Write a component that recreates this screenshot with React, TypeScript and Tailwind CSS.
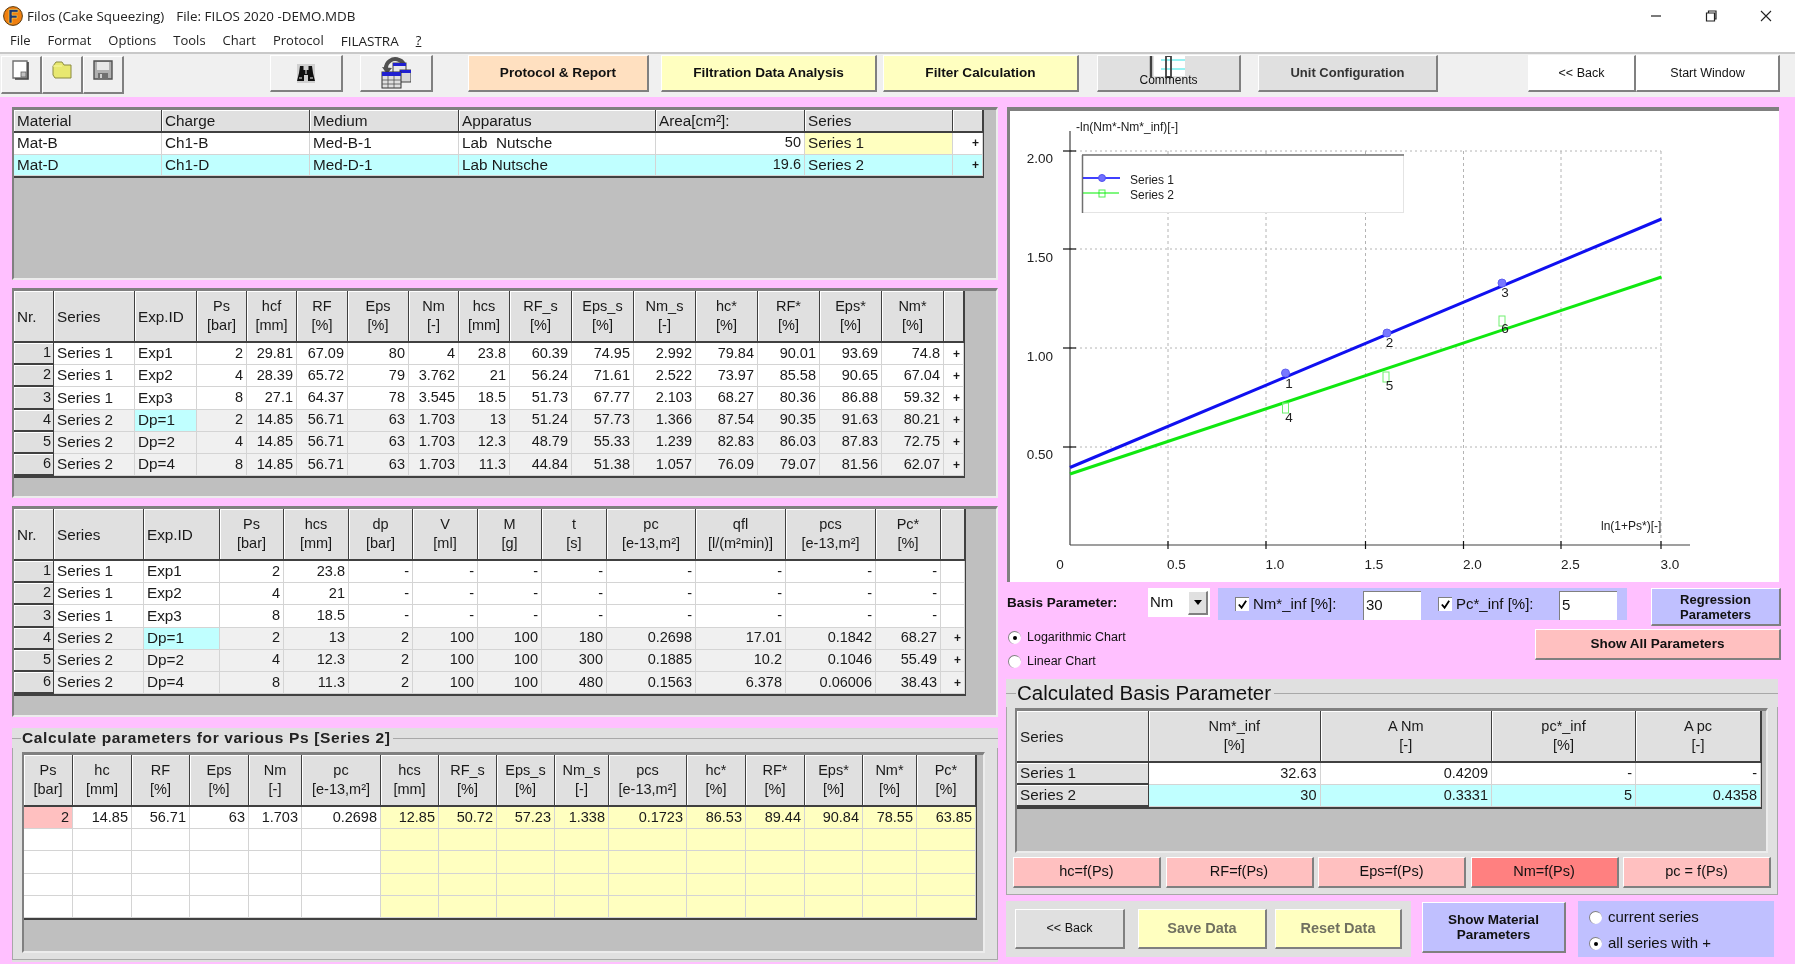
const raised = 'border-t border-l border-t-white border-l-white border-r-2 border-b-2 border-r-[#808080] border-b-[#808080]';
const well = 'bg-[#bfbfbf] border-t-[3px] border-l-2 border-t-[#808080] border-l-[#808080] border-r-2 border-b-2 border-r-[#ececec] border-b-[#ececec]';

interface GridProps {
  cols: string;
  headers: string[];
  headerHeight: string;
  rowHeight: string;
  rows: string[][];
  left: number[];
  rightCells?: number[];
  rowHead?: boolean;
  rowHeadLeft?: boolean;
  bg?: (row: number, col: number) => string;
}

function DataGrid({ cols, headers, headerHeight, rowHeight, rows, left, rightCells = [], rowHead = false, rowHeadLeft = false, bg }: GridProps) {
  return (
    <div className={`grid w-fit border-r border-b-2 border-r-[#404040] border-b-[#404040] text-[14.5px] text-[#1a1a1a] ${cols}`}>
      {headers.map((h, i) => (
        <div
          key={i}
          className={`flex flex-col justify-center border-r border-b-2 border-r-[#404040] border-b-[#404040] bg-[#e0e0e0] leading-[19px] shadow-[inset_1px_1px_0_#fff] ${headerHeight} ${left.includes(i) ? 'items-start pl-[3px] text-[15.3px]' : 'items-center'}`}
        >
          {h.split('\n').map((line) => (
            <span key={line} className="whitespace-nowrap">{line}</span>
          ))}
        </div>
      ))}
      {rows.map((row, r) =>
        row.map((cell, c) => {
          if (rowHead && c === 0) {
            return (
              <div key={c} className={`flex items-center border-r border-b-2 border-r-[#404040] border-b-[#404040] bg-[#e0e0e0] shadow-[inset_1px_1px_0_#fff] ${rowHeight} ${rowHeadLeft ? 'justify-start pl-[3px] text-[15.3px]' : 'justify-end pr-[2px]'}`}>
                {cell}
              </div>
            );
          }
          const plus = cell === '+';
          const isLeft = left.includes(c) && !rightCells.includes(c);
          return (
            <div
              key={c}
              className={`flex items-center overflow-hidden whitespace-pre border-r border-b border-r-[#d4d4d4] border-b-[#d4d4d4] ${rowHeight} ${isLeft ? 'justify-start pl-[3px] text-[15.3px]' : 'justify-end pr-[3px]'} ${plus ? 'text-[12px] font-bold' : ''} ${bg ? bg(r, c) : 'bg-white'}`}
            >
              {cell}
            </div>
          );
        }),
      )}
    </div>
  );
}

function Check() {
  return (
    <span className="flex h-[14px] w-[14px] items-center justify-center border-t border-l border-t-[#808080] border-l-[#808080] bg-white">
      <svg viewBox="0 0 12 12" className="h-[11px] w-[11px]">
        <path d="M2 6l3 3.5L10 2" fill="none" stroke="#000" strokeWidth="2" />
      </svg>
    </span>
  );
}

function Radio({ on, label }: { on: boolean; label: string }) {
  return (
    <div className="flex h-[16px] items-center gap-[6px]">
      <span className="flex h-[13px] w-[13px] items-center justify-center rounded-full border-t border-l border-t-[#808080] border-l-[#808080] bg-white">
        {on && <span className="h-[4px] w-[4px] rounded-full bg-black" />}
      </span>
      <span className="whitespace-nowrap">{label}</span>
    </div>
  );
}

function Logo() {
  return (
    <svg viewBox="0 0 20 20" className="h-[20px] w-[20px]">
      <circle cx="10" cy="10" r="9.4" fill="#f08010" stroke="#5a3a10" strokeWidth="1" />
      <path d="M6 3.5h9v2.8H9v3h5v2.8H9v5H6z" fill="#20386e" stroke="#f8d860" strokeWidth="0.6" />
    </svg>
  );
}

function NewIcon() {
  return (
    <svg viewBox="0 0 18 20" className="h-[20px] w-[18px]">
      <path d="M1 1h14v17H1z" fill="#fff" stroke="#707070" strokeWidth="1.4" />
      <path d="M16 2v17H3" fill="none" stroke="#404040" strokeWidth="1.6" />
      <rect x="9" y="12" width="5" height="5" fill="#c0c0c0" stroke="#606060" strokeWidth="0.8" />
    </svg>
  );
}

function FolderIcon() {
  return (
    <svg viewBox="0 0 20 18" className="h-[18px] w-[20px]">
      <path d="M1 5l3-4h6l2 3h7v13H3L1 14z" fill="#e8e870" stroke="#8a8a40" strokeWidth="1" />
      <path d="M1 5h9" fill="none" stroke="#f8f8a0" strokeWidth="1" />
    </svg>
  );
}

function SaveIcon() {
  return (
    <svg viewBox="0 0 20 20" className="h-[20px] w-[20px]">
      <path d="M1 1h18v18H1z" fill="#b0b0b0" stroke="#505050" strokeWidth="1.4" />
      <rect x="4" y="2" width="12" height="8" fill="#e8e8e8" />
      <rect x="5" y="13" width="10" height="6" fill="#707070" />
      <rect x="7" y="14" width="2" height="4" fill="#d0d0d0" />
    </svg>
  );
}

function BinocularsIcon() {
  return (
    <svg viewBox="0 0 18 19" className="h-[19px] w-[18px]">
      <rect width="18" height="19" fill="#d0d0d0" />
      <path d="M3 2h3.5v4h5V2H15l1 7 2 8h-7v-6H7v6H0l2-8z" fill="#101010" />
      <path d="M8 6h2v4H8zM2 13h3v2H2zM13 13h3v2h-3z" fill="#808080" />
    </svg>
  );
}

function CalendarIcon() {
  return (
    <svg viewBox="0 0 30 32" className="h-[32px] w-[30px]">
      <path d="M5 13C4 5 12 0 18 3c3 1 5 4 5 7" fill="none" stroke="#505050" strokeWidth="4" />
      <path d="M1 10l5 7 5-6z" fill="#505050" />
      <rect x="12" y="6" width="13" height="10" fill="#e8e8e8" stroke="#404040" />
      <rect x="12" y="6" width="13" height="3" fill="#2020d0" />
      <rect x="19" y="13" width="11" height="12" fill="#d8d8d8" stroke="#404040" />
      <rect x="19" y="13" width="11" height="3" fill="#2020d0" />
      <rect x="1" y="15" width="19" height="16" fill="#e0e0e0" stroke="#303030" />
      <rect x="1" y="15" width="19" height="4" fill="#2020d0" />
      <path d="M1 23h19M1 27h19M7 19v12M13 19v12" stroke="#505050" strokeWidth="0.8" />
    </svg>
  );
}

function CommentsIcon() {
  return (
    <svg viewBox="0 0 40 22" className="h-[22px] w-[40px]">
      <rect x="5" y="0" width="31" height="20" fill="#fff" />
      <path d="M12 4h24M12 13h24" stroke="#30e8e8" strokeWidth="1.2" />
      <path d="M2 0v21" stroke="#404040" strokeWidth="2.4" />
      <path d="M17 0h5v21h-5z" fill="none" stroke="#404040" strokeWidth="1.8" />
    </svg>
  );
}

function Chart() {
  const xs = [1169, 1267, 1366.5, 1464.5, 1562, 1662];
  const ys = [151, 249, 348, 447];
  const xLabels: [number, string][] = [[1061, '0'], [1177.5, '0.5'], [1276, '1.0'], [1375, '1.5'], [1473.5, '2.0'], [1571.5, '2.5'], [1671, '3.0']];
  const yLabels: [number, string][] = [[163, '2.00'], [262, '1.50'], [361, '1.00'], [459, '0.50']];
  const blue: [number, number][] = [[1286.5, 373], [1388, 333], [1503, 283]];
  const green: [number, number][] = [[1286.5, 408], [1387, 377], [1503, 321]];
  const nums: [number, number, string][] = [[1290, 388, '1'], [1390.5, 347, '2'], [1506, 297, '3'], [1290, 422, '4'], [1390.5, 390, '5'], [1506, 333, '6']];
  return (
    <svg viewBox="1011 111 770 470" className="h-[470px] w-[770px] text-[13.5px]">
      {xs.map((x) => (
        <line key={x} x1={x} y1={151} x2={x} y2={545} stroke="#b4b4b4" strokeDasharray="3 3" />
      ))}
      {ys.map((y) => (
        <line key={y} x1={1071} y1={y} x2={1662} y2={y} stroke="#b4b4b4" strokeDasharray="2 3" />
      ))}
      <line x1={1071} y1={131} x2={1071} y2={545} stroke="#404040" strokeWidth="1.2" />
      <line x1={1071} y1={545} x2={1691} y2={545} stroke="#404040" strokeWidth="1.2" />
      {ys.map((y) => (
        <line key={y} x1={1064} y1={y} x2={1077} y2={y} stroke="#101010" strokeWidth="1.2" />
      ))}
      {xs.map((x) => (
        <line key={x} x1={x} y1={541} x2={x} y2={549} stroke="#101010" strokeWidth="1.2" />
      ))}
      {yLabels.map(([y, t]) => (
        <text key={t} x={1054} y={y} textAnchor="end" fill="#202020">{t}</text>
      ))}
      {xLabels.map(([x, t]) => (
        <text key={t} x={x} y={569} textAnchor="middle" fill="#202020">{t}</text>
      ))}
      <text x={1077} y={131} fill="#202020" className="text-[12px]">-ln(Nm*-Nm*_inf)[-]</text>
      <text x={1602} y={530} fill="#202020" className="text-[12px]">ln(1+Ps*)[-]</text>
      <rect x={1083.5} y={154.5} width={321} height={58} fill="#fff" stroke="#e4e4e4" />
      <path d="M1083 155h322M1083.5 155v58" fill="none" stroke="#707070" strokeWidth="1.5" />
      <line x1={1084} y1={178} x2={1121} y2={178} stroke="#0000ff" strokeWidth="1.5" />
      <circle cx={1103} cy={178} r={3.5} fill="#7070ff" stroke="#5050f0" />
      <rect x={1100} y={190} width={6} height={7} fill="#fff" stroke="#50f050" />
      <line x1={1084} y1={193} x2={1120} y2={193} stroke="#00f000" strokeWidth="1.2" />
      <text x={1131} y={184} fill="#202020" className="text-[12px]">Series 1</text>
      <text x={1131} y={199} fill="#202020" className="text-[12px]">Series 2</text>
      <line x1={1071} y1={467.5} x2={1662.5} y2={219} stroke="#1010f0" strokeWidth="3" />
      <line x1={1071} y1={474} x2={1662.5} y2={277} stroke="#10e810" strokeWidth="3" />
      {blue.map(([x, y]) => (
        <circle key={x} cx={x} cy={y} r={4} fill="#7878ff" stroke="#6060f0" />
      ))}
      {green.map(([x, y]) => (
        <rect key={x} x={x - 3} y={y - 5} width={6} height={10} fill="#fff" fillOpacity="0.4" stroke="#70f070" />
      ))}
      {nums.map(([x, y, t]) => (
        <text key={t} x={x} y={y} textAnchor="middle" fill="#202020">{t}</text>
      ))}
    </svg>
  );
}

const experimentRows = [
  ['1', 'Series 1', 'Exp1', '2', '29.81', '67.09', '80', '4', '23.8', '60.39', '74.95', '2.992', '79.84', '90.01', '93.69', '74.8', '+'],
  ['2', 'Series 1', 'Exp2', '4', '28.39', '65.72', '79', '3.762', '21', '56.24', '71.61', '2.522', '73.97', '85.58', '90.65', '67.04', '+'],
  ['3', 'Series 1', 'Exp3', '8', '27.1', '64.37', '78', '3.545', '18.5', '51.73', '67.77', '2.103', '68.27', '80.36', '86.88', '59.32', '+'],
  ['4', 'Series 2', 'Dp=1', '2', '14.85', '56.71', '63', '1.703', '13', '51.24', '57.73', '1.366', '87.54', '90.35', '91.63', '80.21', '+'],
  ['5', 'Series 2', 'Dp=2', '4', '14.85', '56.71', '63', '1.703', '12.3', '48.79', '55.33', '1.239', '82.83', '86.03', '87.83', '72.75', '+'],
  ['6', 'Series 2', 'Dp=4', '8', '14.85', '56.71', '63', '1.703', '11.3', '44.84', '51.38', '1.057', '76.09', '79.07', '81.56', '62.07', '+'],
];

const permeabilityRows = [
  ['1', 'Series 1', 'Exp1', '2', '23.8', '-', '-', '-', '-', '-', '-', '-', '-', ''],
  ['2', 'Series 1', 'Exp2', '4', '21', '-', '-', '-', '-', '-', '-', '-', '-', ''],
  ['3', 'Series 1', 'Exp3', '8', '18.5', '-', '-', '-', '-', '-', '-', '-', '-', ''],
  ['4', 'Series 2', 'Dp=1', '2', '13', '2', '100', '100', '180', '0.2698', '17.01', '0.1842', '68.27', '+'],
  ['5', 'Series 2', 'Dp=2', '4', '12.3', '2', '100', '100', '300', '0.1885', '10.2', '0.1046', '55.49', '+'],
  ['6', 'Series 2', 'Dp=4', '8', '11.3', '2', '100', '100', '480', '0.1563', '6.378', '0.06006', '38.43', '+'],
];

const empty = Array.from({ length: 16 }, () => '');
const calcRows = [
  ['2', '14.85', '56.71', '63', '1.703', '0.2698', '12.85', '50.72', '57.23', '1.338', '0.1723', '86.53', '89.44', '90.84', '78.55', '63.85'],
  empty, empty, empty, empty,
];

const seriesBg = (r: number, c: number) => {
  if (r < 3) return 'bg-white';
  if (r === 3 && c === 2) return 'bg-[#c0ffff]';
  return 'bg-[#f0f0f0]';
};

function App() {
  return (
    <div className="flex h-[964px] w-[1795px] flex-col overflow-hidden bg-white [font-family:'Liberation_Sans',Arial,sans-serif] text-[#111] blur-[0.35px]">
      {/* title + menu */}
      <div className="flex h-[30px] items-center pl-[3px] pt-[2px] [font-family:'Open_Sans',sans-serif] text-[13.4px] text-[#222]">
        <Logo />
        <span className="ml-[4px]">Filos (Cake Squeezing)</span>
        <span className="ml-[12px]">File: FILOS 2020 -DEMO.MDB</span>
        <span className="ml-auto mr-[23px] flex items-center gap-[43px]">
          <svg viewBox="0 0 12 12" className="h-[12px] w-[12px]"><path d="M1 6h10" stroke="#222" strokeWidth="1.2" /></svg>
          <svg viewBox="0 0 12 12" className="h-[12px] w-[12px]"><path d="M1.5 3h8v8h-8zM3.5 3V1h7.5v8H9.5" fill="none" stroke="#222" strokeWidth="1.2" /></svg>
          <svg viewBox="0 0 12 12" className="h-[12px] w-[12px]"><path d="M1 1l10 10M11 1L1 11" stroke="#222" strokeWidth="1.1" /></svg>
        </span>
      </div>
      <div className="flex h-[22px] items-center gap-[17px] pl-[10px] [font-family:'Open_Sans',sans-serif] text-[13px] text-[#222]">
        <span>File</span>
        <span>Format</span>
        <span>Options</span>
        <span>Tools</span>
        <span>Chart</span>
        <span>Protocol</span>
        <span className="text-[13.5px]">FILASTRA</span>
        <span className="underline">?</span>
      </div>

      {/* toolbar */}
      <div className="flex h-[45px] items-start border-t-2 border-t-[#c8c8c8] bg-[#f0f0f0] pt-[1px] text-[13.6px]">
        <button className={`ml-[1px] mt-[1px] flex h-[38px] w-[41px] items-start justify-center pt-[3px] ${raised}`}><NewIcon /></button>
        <button className={`mt-[1px] flex h-[38px] w-[41px] items-start justify-center pt-[4px] ${raised}`}><FolderIcon /></button>
        <button className={`mt-[1px] flex h-[38px] w-[41px] items-start justify-center pt-[3px] ${raised}`}><SaveIcon /></button>
        <button className={`ml-[146px] flex h-[37px] w-[73px] items-center justify-center ${raised}`}><BinocularsIcon /></button>
        <button className={`ml-[17px] flex h-[37px] w-[73px] items-center justify-center ${raised}`}><CalendarIcon /></button>
        <button className={`ml-[35px] h-[37px] w-[181px] bg-[#ffe0c0] font-bold ${raised}`}>Protocol &amp; Report</button>
        <button className={`ml-[12px] h-[37px] w-[216px] bg-[#ffffc0] font-bold ${raised}`}>Filtration Data Analysis</button>
        <button className={`ml-[6px] h-[37px] w-[196px] bg-[#ffffc0] font-bold ${raised}`}>Filter Calculation</button>
        <button className={`ml-[18px] flex h-[37px] w-[144px] flex-col items-center bg-[#e0e0e0] text-[12px] ${raised}`}>
          <CommentsIcon />
          <span className="-mt-[5px] leading-[14px]">Comments</span>
        </button>
        <button className={`ml-[17px] h-[37px] w-[180px] bg-[#e0e0e0] text-[13px] font-bold text-[#333] ${raised}`}>Unit Configuration</button>
        <button className={`ml-[90px] h-[37px] w-[108px] bg-white text-[12.5px] ${raised}`}>&lt;&lt; Back</button>
        <button className={`h-[37px] w-[144px] bg-white text-[12.5px] ${raised}`}>Start Window</button>
      </div>

      {/* main */}
      <div className="flex flex-1 bg-[#ffc0ff] pl-[12px] pt-[10px]">
        {/* left column */}
        <div className="flex w-[986px] flex-col">
          <div className={`h-[173px] ${well}`}>
            <DataGrid
              cols="grid-cols-[148px_148px_149px_197px_149px_148px_30px]"
              headers={['Material', 'Charge', 'Medium', 'Apparatus', 'Area[cm²]:', 'Series', '']}
              headerHeight="h-[23px]"
              rowHeight="h-[21.7px]"
              left={[0, 1, 2, 3, 4, 5]}
              rightCells={[4]}
              rows={[
                ['Mat-B', 'Ch1-B', 'Med-B-1', 'Lab  Nutsche', '50', 'Series 1', '+'],
                ['Mat-D', 'Ch1-D', 'Med-D-1', 'Lab Nutsche', '19.6', 'Series 2', '+'],
              ]}
              bg={(r, c) => (r === 1 ? 'bg-[#c0ffff]' : c === 5 ? 'bg-[#ffffc0]' : 'bg-white')}
            />
          </div>
          <div className={`mt-[8px] h-[210px] ${well}`}>
            <DataGrid
              cols="grid-cols-[40px_81px_62px_50px_50px_51px_61px_50px_51px_62px_62px_62px_62px_62px_62px_62px_20px]"
              headers={['Nr.', 'Series', 'Exp.ID', 'Ps\n[bar]', 'hcf\n[mm]', 'RF\n[%]', 'Eps\n[%]', 'Nm\n[-]', 'hcs\n[mm]', 'RF_s\n[%]', 'Eps_s\n[%]', 'Nm_s\n[-]', 'hc*\n[%]', 'RF*\n[%]', 'Eps*\n[%]', 'Nm*\n[%]', '']}
              headerHeight="h-[52px]"
              rowHeight="h-[22.2px]"
              left={[0, 1, 2]}
              rowHead
              rows={experimentRows}
              bg={seriesBg}
            />
          </div>
          <div className={`mt-[8px] h-[211px] ${well}`}>
            <DataGrid
              cols="grid-cols-[40px_90px_76px_64px_65px_64px_65px_64px_65px_89px_90px_90px_65px_24px]"
              headers={['Nr.', 'Series', 'Exp.ID', 'Ps\n[bar]', 'hcs\n[mm]', 'dp\n[bar]', 'V\n[ml]', 'M\n[g]', 't\n[s]', 'pc\n[e-13,m²]', 'qfl\n[l/(m²min)]', 'pcs\n[e-13,m²]', 'Pc*\n[%]', '']}
              headerHeight="h-[52px]"
              rowHeight="h-[22.2px]"
              left={[0, 1, 2]}
              rowHead
              rows={permeabilityRows}
              bg={seriesBg}
            />
          </div>
          <div className="mt-[11px] h-[234px] bg-[#e0e0e0]">
            <div className="flex h-[20px] items-center">
              <div className="h-px w-[9px] bg-[#a8a8a8]" />
              <span className="whitespace-nowrap pl-px pr-[3px] text-[15.5px] font-bold tracking-[0.65px] text-[#222]">Calculate parameters for various Ps [Series 2]</span>
              <div className="h-px flex-1 bg-[#a8a8a8]" />
            </div>
            <div className="h-[212px] border-x border-b border-[#a8a8a8] pl-[9px] pt-[4px]">
              <div className={`h-[201px] w-[963px] ${well}`}>
                <DataGrid
                  cols="grid-cols-[49px_59px_58px_59px_53px_79px_58px_58px_58px_54px_78px_59px_59px_58px_54px_59px]"
                  headers={['Ps\n[bar]', 'hc\n[mm]', 'RF\n[%]', 'Eps\n[%]', 'Nm\n[-]', 'pc\n[e-13,m²]', 'hcs\n[mm]', 'RF_s\n[%]', 'Eps_s\n[%]', 'Nm_s\n[-]', 'pcs\n[e-13,m²]', 'hc*\n[%]', 'RF*\n[%]', 'Eps*\n[%]', 'Nm*\n[%]', 'Pc*\n[%]']}
                  headerHeight="h-[52px]"
                  rowHeight="h-[22.2px]"
                  left={[]}
                  rows={calcRows}
                  bg={(r, c) => (r === 0 && c === 0 ? 'bg-[#ffc0c0]' : c >= 6 ? 'bg-[#ffffc0]' : 'bg-white')}
                />
              </div>
            </div>
          </div>
        </div>

        {/* right column */}
        <div className="ml-[8px] flex w-[776px] flex-col">
          <div className="ml-px h-[475px] w-[772px] border-t-4 border-l-[3px] border-t-[#808080] border-l-[#808080] bg-white">
            <Chart />
          </div>

          <div className="mt-[6px] flex items-start text-[15px]">
            <span className="ml-px flex h-[30px] w-[141px] items-center text-[13.5px] font-bold">Basis Parameter:</span>
            <div className="flex h-[29px] w-[62px] items-center justify-between bg-white pl-[2px] pr-[2px]">
              <span>Nm</span>
              <span className={`flex h-[24px] w-[20px] items-center justify-center bg-[#e0e0e0] ${raised}`}>
                <svg viewBox="0 0 8 5" className="h-[5px] w-[8px]"><path d="M0 0h8L4 5z" fill="#000" /></svg>
              </span>
            </div>
            <div className="ml-[8px] flex h-[32px] w-[409px] items-center bg-[#c0c0ff]">
              <span className="ml-[17px]"><Check /></span>
              <span className="ml-[4px] w-[110px] whitespace-nowrap">Nm*_inf [%]:</span>
              <span className="flex h-[29px] w-[58px] items-center self-end border-t border-l border-t-[#808080] border-l-[#808080] bg-white pb-[2px] pl-[2px]">30</span>
              <span className="ml-[17px]"><Check /></span>
              <span className="ml-[4px] w-[103px] whitespace-nowrap">Pc*_inf [%]:</span>
              <span className="flex h-[29px] w-[58px] items-center self-end border-t border-l border-t-[#808080] border-l-[#808080] bg-white pb-[2px] pl-[2px]">5</span>
            </div>
            <button className={`ml-[24px] h-[38px] w-[130px] bg-[#c0c0ff] text-[13px] font-bold leading-[15px] ${raised}`}>
              Regression<br />Parameters
            </button>
          </div>

          <div className="mt-[3px] flex h-[47px] items-start justify-between text-[12.5px]">
            <div className="ml-[2px] flex flex-col gap-[8px]">
              <Radio on label="Logarithmic Chart" />
              <Radio on={false} label="Linear Chart" />
            </div>
            <button className={`mr-px h-[31px] w-[246px] bg-[#ffc0c0] text-[13.5px] font-bold ${raised}`}>Show All Parameters</button>
          </div>

          <div className="mt-[3px] h-[216px] w-[772px] bg-[#e0e0e0]">
            <div className="flex h-[28px] items-center">
              <div className="h-px w-[10px] bg-[#a8a8a8]" />
              <span className="whitespace-nowrap pl-px pr-[3px] text-[20.5px]">Calculated Basis Parameter</span>
              <div className="h-px flex-1 bg-[#a8a8a8]" />
            </div>
            <div className="h-[188px] border-x border-b border-[#a8a8a8] pl-[8px] pt-px">
              <div className={`h-[145px] w-[753px] ${well}`}>
                <DataGrid
                  cols="grid-cols-[132px_171.5px_171.5px_144px_125px]"
                  headers={['Series', 'Nm*_inf\n[%]', 'A Nm\n[-]', 'pc*_inf\n[%]', 'A pc\n[-]']}
                  headerHeight="h-[52px]"
                  rowHeight="h-[22px]"
                  left={[0]}
                  rowHead
                  rowHeadLeft
                  rows={[
                    ['Series 1', '32.63', '0.4209', '-', '-'],
                    ['Series 2', '30', '0.3331', '5', '0.4358'],
                  ]}
                  bg={(r) => (r === 1 ? 'bg-[#c0ffff]' : 'bg-white')}
                />
              </div>
              <div className="-ml-[2px] mt-[4px] flex gap-[4.5px] text-[14.5px]">
                <button className={`h-[31px] w-[148px] bg-[#ffc0c0] ${raised}`}>hc=f(Ps)</button>
                <button className={`h-[31px] w-[148px] bg-[#ffc0c0] ${raised}`}>RF=f(Ps)</button>
                <button className={`h-[31px] w-[148px] bg-[#ffc0c0] ${raised}`}>Eps=f(Ps)</button>
                <button className={`h-[31px] w-[148px] bg-[#ff8080] ${raised}`}>Nm=f(Ps)</button>
                <button className={`h-[31px] w-[148px] bg-[#ffc0c0] ${raised}`}>pc = f(Ps)</button>
              </div>
            </div>
          </div>

          <div className="mt-[6px] flex items-start">
            <div className="flex h-[56px] w-[405px] items-center bg-[#e0e0e0] pl-[9px] text-[14.5px]">
              <button className={`h-[40px] w-[110px] bg-[#e0e0e0] text-[12.5px] ${raised}`}>&lt;&lt; Back</button>
              <button className={`ml-[13px] h-[40px] w-[129px] bg-[#ffffc0] font-bold text-[#707060] ${raised}`}>Save Data</button>
              <button className={`ml-[8px] h-[40px] w-[127px] bg-[#ffffc0] font-bold text-[#707060] ${raised}`}>Reset Data</button>
            </div>
            <button className={`ml-[11px] mt-px h-[51px] w-[144px] bg-[#c0c0ff] text-[13.5px] font-bold leading-[15px] ${raised}`}>
              Show Material<br />Parameters
            </button>
            <div className="ml-[12px] flex h-[56px] w-[196px] flex-col gap-[10px] bg-[#c0c0ff] pl-[11px] pt-[8px] text-[15px]">
              <Radio on={false} label="current series" />
              <Radio on label="all series with +" />
            </div>
          </div>
        </div>
      </div>
    </div>
  );
}

export default App;
